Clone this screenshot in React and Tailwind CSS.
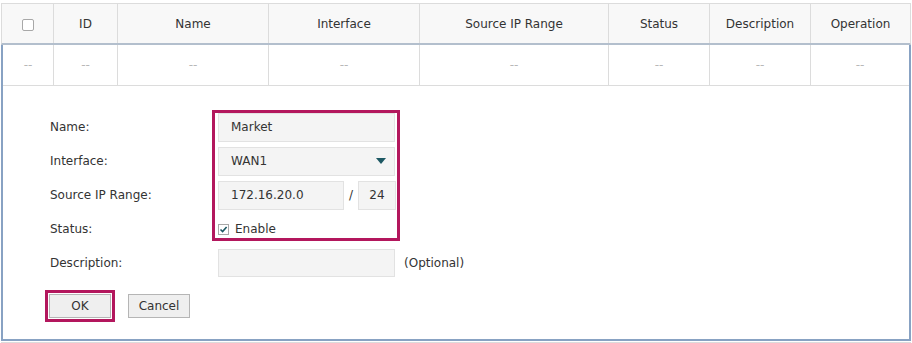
import React from 'react';

const font = { fontFamily: '"DejaVu Sans", Verdana, sans-serif' };

const headers = ['ID', 'Name', 'Interface', 'Source IP Range', 'Status', 'Description', 'Operation'];

const Caret = () => (
    <svg width="10" height="6" viewBox="0 0 10 6">
        <path d="M0 0 H10 L5 6 Z" fill="#1d5863" />
    </svg>
);

const Input = ({ value, className = '' }) => (
    <div className={`h-[29px] bg-[#f4f4f4] border border-[#e2e2e2] flex items-center pl-[12px] text-[#333] ${className}`}>
        {value}
    </div>
);

const Row = ({ label, children }) => (
    <div className="flex items-center h-[34px]">
        <div className="w-[215px] pl-[47px] text-[#333]">{label}</div>
        <div className="flex items-center">{children}</div>
    </div>
);

export default function App() {
    return (
        <div className="w-[912px] h-[343px] bg-white overflow-hidden text-[12px]" style={font}>
            <div className="ml-[1px] mt-[3px] w-[910px]">
                {/* header */}
                <div className="grid grid-cols-[51px_64px_151px_151px_189px_101px_101px_100px] h-[42px] bg-[#f8f8f8] border-t border-x border-[#dcdcdc] border-b-2 border-b-[#b3bfcd] text-[#333]">
                    <div className="flex items-center justify-center pt-[2px]">
                        <span className="w-[12px] h-[12px] rounded-[2px] border border-[#a8a8a8] bg-white" />
                    </div>
                    {headers.map((h) => (
                        <div key={h} className="border-l border-[#dcdcdc] flex items-center justify-center pt-[1px]">
                            {h}
                        </div>
                    ))}
                </div>

                {/* editing row */}
                <div className="border-x-2 border-b-2 border-[#88a2c3]">
                    <div className="grid grid-cols-[50px_64px_151px_151px_189px_101px_101px_99px] h-[41px] border-b border-[#dcdcdc] text-[#b8b8b8]">
                        <div className="flex items-center justify-center">--</div>
                        {headers.map((h) => (
                            <div key={h} className="border-l border-[#dcdcdc] flex items-center justify-center">
                                --
                            </div>
                        ))}
                    </div>

                    <div className="pt-[24px] pb-[17px]">
                        <div className="relative">
                            <Row label="Name:">
                                <Input value="Market" className="w-[177px]" />
                            </Row>
                            <Row label="Interface:">
                                <div className="w-[177px] h-[29px] bg-[#f4f4f4] border border-[#e2e2e2] flex items-center justify-between pl-[12px] pr-[8px] text-[#333]">
                                    <span>WAN1</span>
                                    <Caret />
                                </div>
                            </Row>
                            <Row label="Source IP Range:">
                                <Input value="172.16.20.0" className="w-[126px]" />
                                <span className="w-[14px] text-center text-[#333]">/</span>
                                <div className="w-[38px] h-[29px] bg-[#f4f4f4] border border-[#e2e2e2] flex items-center justify-center text-[#333]">
                                    24
                                </div>
                            </Row>
                            <Row label="Status:">
                                <span className="w-[11px] h-[11px] border border-[#a8a8a8] bg-white flex items-center justify-center">
                                    <svg width="9" height="9" viewBox="0 0 9 9">
                                        <path d="M1.5 4.5 L3.6 6.6 L7.6 2" fill="none" stroke="#1d5863" strokeWidth="1.6" />
                                    </svg>
                                </span>
                                <span className="ml-[6px] text-[#333]">Enable</span>
                            </Row>
                            <div className="absolute left-[209px] top-0 w-[188px] h-[131px] border-[3px] border-[#b3175d] pointer-events-none" />
                        </div>
                        <Row label="Description:">
                            <div className="w-[177px] h-[28px] bg-[#f4f4f4] border border-[#e2e2e2]" />
                            <span className="ml-[9px] text-[#333]">(Optional)</span>
                        </Row>

                        <div className="flex items-center mt-[10px] pl-[42px] gap-[13px]">
                            <span className="border-[3px] border-[#b3175d] p-[1px] flex">
                                <button className="w-[62px] h-[24px] bg-[#efefef] border border-[#b5b5b5] text-[#333]">
                                    OK
                                </button>
                            </span>
                            <button className="w-[62px] h-[24px] bg-[#efefef] border border-[#b5b5b5] text-[#333]">
                                Cancel
                            </button>
                        </div>
                    </div>
                </div>

                {/* next row, cut off */}
                <div className="mt-[1px] grid grid-cols-[51px_64px_151px_151px_189px_101px_101px_100px] h-[4px] border-t border-x border-[#dcdcdc]">
                    <div />
                    {headers.map((h) => (
                        <div key={h} className="border-l border-[#dcdcdc]" />
                    ))}
                </div>
            </div>
        </div>
    );
}
